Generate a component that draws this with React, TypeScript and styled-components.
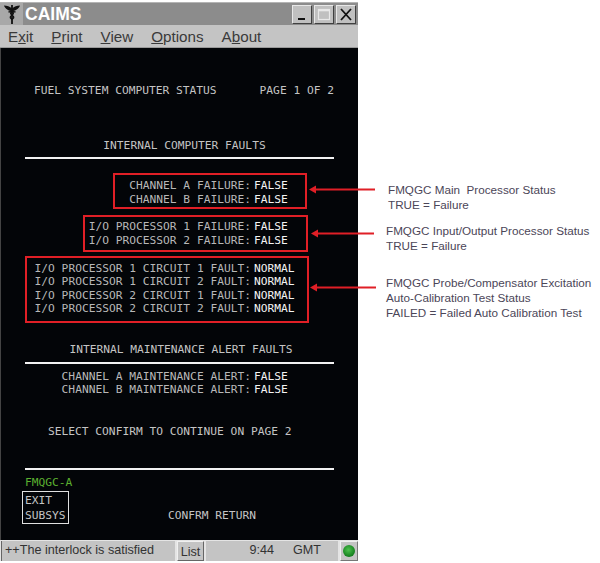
import styled, { createGlobalStyle } from "styled-components"

const GlobalStyle = createGlobalStyle`
	html, body {
		margin: 0;
		padding: 0;
		background: #fff;
	}
`

const Page = styled.div`
	position: relative;
	width: 600px;
	height: 563px;
	overflow: hidden;
	display: flex;
	align-items: flex-start;
`

const Window = styled.div`
	width: 358px;
	height: 559px;
	margin-top: 2px;
	flex: none;
	display: flex;
	flex-direction: column;
	background: #c0c0c0;
	font-family: "Liberation Sans", Arial, sans-serif;
`

const TitleBar = styled.div`
	height: 23px;
	flex: none;
	display: flex;
	align-items: center;
	background: #8c8c8c;
	border-top: 1px solid #b4b4b4;
	box-sizing: border-box;
`

const AppIcon = styled.div`
	width: 23px;
	height: 22px;
	flex: none;
	display: flex;
	align-items: center;
	justify-content: center;
	background: #a8a8a8;
`

const AppName = styled.div`
	margin-left: 2px;
	color: #fff;
	font-size: 17.5px;
	font-weight: 700;
	flex: 1;
`

const WinButtons = styled.div`
	display: flex;
	gap: 2px;
	padding-right: 2px;
`

const WinButton = styled.div`
	width: 20px;
	height: 19px;
	display: flex;
	align-items: center;
	justify-content: center;
	background: #c0c0c0;
	border: 1px solid;
	border-color: #e8e8e8 #404040 #404040 #e8e8e8;
	box-sizing: border-box;
`

const MenuBar = styled.div`
	height: 23px;
	flex: none;
	display: flex;
	align-items: center;
	padding: 0 0 0 8px;
	gap: 18px;
	background: #c4c4c4;
	border-bottom: 1px solid #9a9a9a;
	box-sizing: border-box;
	color: #3a3a3a;
	font-size: 15.2px;
`

const Terminal = styled.div`
	flex: 1;
	min-height: 0;
	display: flex;
	flex-direction: column;
	padding: 36px 24px 0;
	border-left: 1px solid #444;
	background: #030508;
	color: #c4c4c4;
	font-family: "DejaVu Sans Mono", "Liberation Mono", monospace;
	font-size: 11.24px;
	line-height: 13.6px;
	white-space: pre;
`

const HeaderLine = styled.div`
	display: flex;
	justify-content: space-between;
	padding-left: 9px;
`

const Heading = styled.div<{ $top: number; $shift: number }>`
	margin-top: ${p => p.$top}px;
	padding-left: ${p => p.$shift}px;
	text-align: center;
`

const Rule = styled.div<{ $top?: number }>`
	height: 2px;
	margin-top: ${p => p.$top ?? 5}px;
	background: #f2f2f2;
`

const FaultGroup = styled.div<{ $top: number }>`
	margin-top: ${p => p.$top}px;
	display: flex;
	flex-direction: column;
`

const StatusRow = styled.div`
	display: grid;
	grid-template-columns: 226px 1fr;
	column-gap: 3px;
`

const RowLabel = styled.span`
	text-align: right;
	color: #b8b8b8;
`

const RowValue = styled.span`
	color: #f4f4f4;
`

const Prompt = styled.div`
	margin-top: 28px;
	padding-left: 23px;
`

const Subsystem = styled.div`
	margin-top: 6px;
	color: #5cb030;
`

const FooterRow = styled.div`
	margin-top: 1px;
	display: flex;
	align-items: flex-end;
	gap: 99px;
	margin-left: -3px;
`

const ExitBox = styled.div`
	width: 47px;
	height: 33px;
	flex: none;
	box-sizing: border-box;
	border: 1px solid #e0e0e0;
	padding: 1px 0 0 2px;
	line-height: 15px;
`

const ConfirmLabel = styled.span`
	padding-bottom: 1px;
`

const StatusBar = styled.div`
	height: 21px;
	flex: none;
	display: flex;
	align-items: stretch;
	gap: 2px;
	padding: 1px 0 0 1px;
	box-sizing: border-box;
	background: #e4e4e4;
	color: #333;
	font-size: 12.6px;
`

const StatusMessage = styled.div`
	width: 174px;
	padding-left: 3px;
	line-height: 19px;
	background: #c4c4c4;
	border-left: 1px solid #666;
	box-sizing: border-box;
`

const ListButton = styled.div`
	width: 27px;
	text-align: center;
	line-height: 20px;
	background: #c4c4c4;
	border: 1px solid;
	border-color: #f0f0f0 #666 #666 #f0f0f0;
	box-sizing: border-box;
`

const ClockPanel = styled.div`
	width: 132px;
	display: flex;
	justify-content: flex-end;
	gap: 19px;
	padding-right: 17px;
	line-height: 19px;
	background: #c4c4c4;
	box-sizing: border-box;
`

const LedPanel = styled.div`
	flex: 1;
	display: flex;
	align-items: center;
	justify-content: center;
	background: #c4c4c4;
	border: 1px solid;
	border-color: #f0f0f0 #777 #777 #f0f0f0;
`

const Led = styled.div`
	width: 12px;
	height: 12px;
	border-radius: 50%;
	background: radial-gradient(circle at 45% 40%, #4ec24e, #0f7a1a 75%);
`

const Outline = styled.div<{ $left: number; $top: number; $width: number; $height: number }>`
	position: absolute;
	left: ${p => p.$left}px;
	top: ${p => p.$top}px;
	width: ${p => p.$width}px;
	height: ${p => p.$height}px;
	box-sizing: border-box;
	border: 2px solid #e01f26;
	pointer-events: none;
`

const Notes = styled.div`
	flex: 1;
	display: flex;
	flex-direction: column;
	padding-top: 182px;
	font-family: "Liberation Sans", Arial, sans-serif;
	font-size: 11.7px;
	line-height: 15px;
	color: #4b4658;
`

const Note = styled.div<{ $indent: number; $top: number }>`
	margin-top: ${p => p.$top}px;
	padding-left: ${p => p.$indent}px;
	white-space: pre;
`

const Arrow = styled.svg<{ $left: number; $top: number }>`
	position: absolute;
	left: ${p => p.$left}px;
	top: ${p => p.$top}px;
`

const Line = ({ label, value }: { label: string; value: string }) => (
	<StatusRow>
		<RowLabel>{label}</RowLabel>
		<RowValue>{value}</RowValue>
	</StatusRow>
)

const RedArrow = ({ left, top, width }: { left: number; top: number; width: number }) => (
	<Arrow $left={left} $top={top} width={width} height="9" viewBox={`0 0 ${width} 9`}>
		<path d={`M7 4.5H${width}`} stroke="#e01f26" strokeWidth="2" />
		<path d="M0 4.5L7 0.5V8.5Z" fill="#e01f26" />
	</Arrow>
)

const App = () => {
	return <Page>
		<GlobalStyle />
		<Window>
			<TitleBar>
				<AppIcon>
					<svg width="16" height="20" viewBox="0 0 16 20">
						<path d="M0 1.5C3 1.5 6 2.5 8 4.5C10 2.5 13 1.5 16 1.5C15 5 11 7 8 7C5 7 1 5 0 1.5Z" fill="#111" />
						<path d="M8 1V20" stroke="#111" strokeWidth="1.8" />
						<path d="M4.5 8C9 7 11 9 8 11C5 13 6 15 9 15" stroke="#111" strokeWidth="1.3" fill="none" />
						<path d="M11.5 8C7 7 5 9 8 11C11 13 10 15 7 15" stroke="#111" strokeWidth="1.3" fill="none" />
					</svg>
				</AppIcon>
				<AppName>CAIMS</AppName>
				<WinButtons>
					<WinButton>
						<svg width="14" height="13" viewBox="0 0 14 13"><path d="M3 11H10" stroke="#111" strokeWidth="2" /></svg>
					</WinButton>
					<WinButton>
						<svg width="14" height="13" viewBox="0 0 14 13"><rect x="1.5" y="1.5" width="11" height="10" fill="none" stroke="#e8e8e8" strokeWidth="1.2" /><path d="M1 2.5H13" stroke="#e8e8e8" strokeWidth="1.6" /></svg>
					</WinButton>
					<WinButton>
						<svg width="14" height="13" viewBox="0 0 14 13"><path d="M2 1L12 12M12 1L2 12" stroke="#111" strokeWidth="1.8" /></svg>
					</WinButton>
				</WinButtons>
			</TitleBar>
			<MenuBar>
				<span>E<u>x</u>it</span>
				<span><u>P</u>rint</span>
				<span><u>V</u>iew</span>
				<span><u>O</u>ptions</span>
				<span>A<u>b</u>out</span>
			</MenuBar>
			<Terminal>
				<HeaderLine>
					<span>FUEL SYSTEM COMPUTER STATUS</span>
					<span>PAGE 1 OF 2</span>
				</HeaderLine>
				<Heading $top={41} $shift={10}>INTERNAL COMPUTER FAULTS</Heading>
				<Rule />
				<FaultGroup $top={20}>
					<Line label="CHANNEL A FAILURE:" value="FALSE" />
					<Line label="CHANNEL B FAILURE:" value="FALSE" />
				</FaultGroup>
				<FaultGroup $top={14}>
					<Line label="I/O PROCESSOR 1 FAILURE:" value="FALSE" />
					<Line label="I/O PROCESSOR 2 FAILURE:" value="FALSE" />
				</FaultGroup>
				<FaultGroup $top={14}>
					<Line label="I/O PROCESSOR 1 CIRCUIT 1 FAULT:" value="NORMAL" />
					<Line label="I/O PROCESSOR 1 CIRCUIT 2 FAULT:" value="NORMAL" />
					<Line label="I/O PROCESSOR 2 CIRCUIT 1 FAULT:" value="NORMAL" />
					<Line label="I/O PROCESSOR 2 CIRCUIT 2 FAULT:" value="NORMAL" />
				</FaultGroup>
				<Heading $top={27} $shift={3}>INTERNAL MAINTENANCE ALERT FAULTS</Heading>
				<Rule />
				<FaultGroup $top={6}>
					<Line label="CHANNEL A MAINTENANCE ALERT:" value="FALSE" />
					<Line label="CHANNEL B MAINTENANCE ALERT:" value="FALSE" />
				</FaultGroup>
				<Prompt>SELECT CONFIRM TO CONTINUE ON PAGE 2</Prompt>
				<Rule $top={30} />
				<Subsystem>FMQGC-A</Subsystem>
				<FooterRow>
					<ExitBox>EXIT{"\n"}SUBSYS</ExitBox>
					<ConfirmLabel>CONFRM RETURN</ConfirmLabel>
				</FooterRow>
			</Terminal>
			<StatusBar>
				<StatusMessage>++The interlock is satisfied</StatusMessage>
				<ListButton>List</ListButton>
				<ClockPanel>
					<span>9:44</span>
					<span>GMT</span>
				</ClockPanel>
				<LedPanel><Led /></LedPanel>
			</StatusBar>
		</Window>
		<Notes>
			<Note $indent={30} $top={0}>FMQGC Main  Processor Status{"\n"}TRUE = Failure</Note>
			<Note $indent={28} $top={11}>FMQGC Input/Output Processor Status{"\n"}TRUE = Failure</Note>
			<Note $indent={28} $top={22}>FMQGC Probe/Compensator Excitation{"\n"}Auto-Calibration Test Status{"\n"}FAILED = Failed Auto Calibration Test</Note>
		</Notes>
		<Outline $left={113} $top={173} $width={194} $height={36} />
		<Outline $left={83} $top={215} $width={225} $height={37} />
		<Outline $left={25} $top={256} $width={284} $height={67} />
		<RedArrow left={309} top={185} width={66} />
		<RedArrow left={311} top={229} width={63} />
		<RedArrow left={310} top={283} width={66} />
	</Page>
}

export default App
